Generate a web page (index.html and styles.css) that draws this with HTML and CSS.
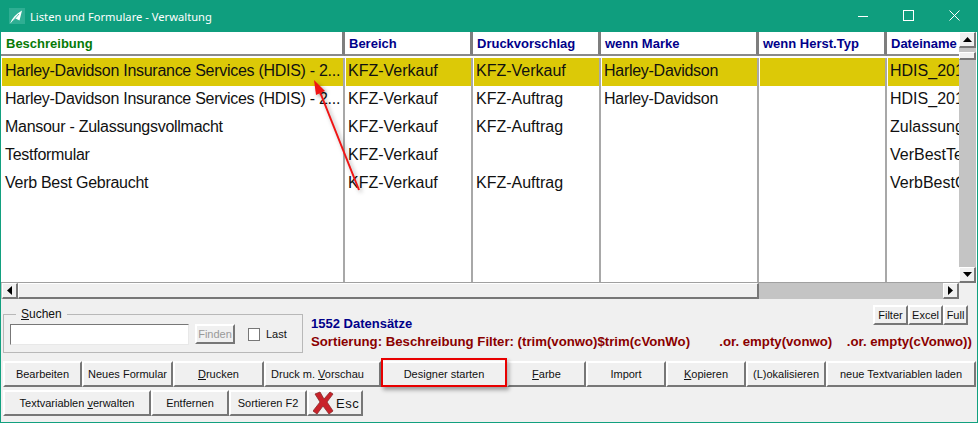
FILE: index.html
```html
<!DOCTYPE html>
<html lang="de">
<head>
<meta charset="utf-8">
<title>Listen und Formulare - Verwaltung</title>
<link rel="stylesheet" href="styles.css">
</head>
<body>
<div class="window">
  <header class="titlebar">
    <svg class="appicon" width="16" height="16" viewBox="0 0 16 16"><rect width="16" height="16" fill="#2fae93"/><path d="M1 15.5C3 10 7 6 13 2.5L10.5 12.5L6.5 10.5Z" fill="#fff"/><path d="M3 14L10 6" stroke="#2fae93" stroke-width=".8"/></svg>
    <span class="title">Listen und Formulare - Verwaltung</span>
    <div class="winbtns">
      <svg width="12" height="12" viewBox="0 0 12 12"><path d="M1 6.5H11" stroke="#fff"/></svg>
      <svg width="12" height="12" viewBox="0 0 12 12"><rect x=".5" y=".5" width="10" height="10" fill="none" stroke="#fff"/></svg>
      <svg width="12" height="12" viewBox="0 0 12 12"><path d="M.5 .5L10.5 10.5M10.5 .5L.5 10.5" stroke="#fff"/></svg>
    </div>
  </header>
  <div class="client">
    <div class="gridbox">
      <div class="gridmain">
        <div class="grid">
          <div class="row head">
            <div class="cell c1 green">Beschreibung</div><div class="cell c2">Bereich</div><div class="cell c3">Druckvorschlag</div><div class="cell c4">wenn Marke</div><div class="cell c5">wenn Herst.Typ</div><div class="cell c6">Dateiname</div>
          </div>
          <div class="row sel"><div class="cell c1">Harley-Davidson Insurance Services (HDIS) - 2...</div><div class="cell c2">KFZ-Verkauf</div><div class="cell c3">KFZ-Verkauf</div><div class="cell c4">Harley-Davidson</div><div class="cell c5"></div><div class="cell c6">HDIS_2017</div></div>
          <div class="row"><div class="cell c1">Harley-Davidson Insurance Services (HDIS) - 2...</div><div class="cell c2">KFZ-Verkauf</div><div class="cell c3">KFZ-Auftrag</div><div class="cell c4">Harley-Davidson</div><div class="cell c5"></div><div class="cell c6">HDIS_2017</div></div>
          <div class="row"><div class="cell c1">Mansour - Zulassungsvollmacht</div><div class="cell c2">KFZ-Verkauf</div><div class="cell c3">KFZ-Auftrag</div><div class="cell c4"></div><div class="cell c5"></div><div class="cell c6">Zulassungsv</div></div>
          <div class="row"><div class="cell c1">Testformular</div><div class="cell c2">KFZ-Verkauf</div><div class="cell c3"></div><div class="cell c4"></div><div class="cell c5"></div><div class="cell c6">VerBestTest</div></div>
          <div class="row"><div class="cell c1">Verb Best Gebraucht</div><div class="cell c2">KFZ-Verkauf</div><div class="cell c3">KFZ-Auftrag</div><div class="cell c4"></div><div class="cell c5"></div><div class="cell c6">VerbBestGe</div></div>
          <div class="row fill"><div class="cell c1"></div><div class="cell c2"></div><div class="cell c3"></div><div class="cell c4"></div><div class="cell c5"></div><div class="cell c6"></div></div>
        </div>
        <div class="vscroll">
          <div class="sbtn"><svg width="9" height="5" viewBox="0 0 9 5"><path d="M4.5 0L9 5H0Z"/></svg></div>
          <div class="vgap"></div>
          <div class="thumb vt"></div>
          <div class="track"></div>
          <div class="sbtn"><svg width="9" height="5" viewBox="0 0 9 5"><path d="M0 0H9L4.5 5Z"/></svg></div>
        </div>
      </div>
      <div class="hscroll">
        <div class="sbtn"><svg width="5" height="9" viewBox="0 0 5 9"><path d="M5 0V9L0 4.5Z"/></svg></div>
        <div class="thumb ht"></div>
        <div class="track"></div>
        <div class="sbtn"><svg width="5" height="9" viewBox="0 0 5 9"><path d="M0 0V9L5 4.5Z"/></svg></div>
        <div class="corner"></div>
      </div>
    </div>
    <div class="info">
      <fieldset class="search">
        <legend><u>S</u>uchen</legend>
        <input class="field" type="text" aria-label="Suchen">
        <button class="btn finden" disabled>Finden</button>
        <label class="last"><span class="check"></span>Last</label>
      </fieldset>
      <div class="status">
        <div class="count">1552 Datensätze</div>
        <div class="sort">Sortierung: Beschreibung Filter: (trim(vonwo)$trim(cVonWo)&nbsp;&nbsp;&nbsp;&nbsp;&nbsp;&nbsp;&nbsp;&nbsp;.or. empty(vonwo)&nbsp;&nbsp;&nbsp;&nbsp;.or. empty(cVonwo))</div>
      </div>
      <div class="minibtns">
        <button class="btn mini">Filter</button><button class="btn mini">Excel</button><button class="btn mini">Full</button>
      </div>
    </div>
    <div class="toolbar r1">
      <button class="btn w1">Bearbeiten</button>
      <button class="btn w2">Neues Formular</button>
      <button class="btn w3"><u>D</u>rucken</button>
      <button class="btn w4">Druck m. <u>V</u>orschau</button>
      <button class="btn w5 marked">Desi<u>g</u>ner starten</button>
      <button class="btn w6"><u>F</u>arbe</button>
      <button class="btn w7">Import</button>
      <button class="btn w8"><u>K</u>opieren</button>
      <button class="btn w9">(L)okalisieren</button>
      <button class="btn w10">neue Textvariablen laden</button>
    </div>
    <div class="toolbar r2">
      <button class="btn x1">Textvariablen <u>v</u>erwalten</button>
      <button class="btn x2">Entfernen</button>
      <button class="btn x3">Sortieren F2</button>
      <button class="btn x4 esc"><svg width="21" height="24" viewBox="0 0 21 24"><path d="M2 3L7 1L11 8L17 1L20 3L14 11L20 20L16 23L10 15L4 23L0 20L7 11Z" fill="#c9222a" stroke="#8a2a2a" stroke-width=".8"/></svg>Esc</button>
    </div>
  </div>
  <svg class="arrow" width="60" height="130" viewBox="0 0 60 130"><path d="M52 114L13 16" stroke="#f01414" stroke-width="2" fill="none"/><path d="M7 4L18 15L9 19Z" fill="#f01414"/></svg>
</div>
</body>
</html>
```
FILE: styles.css
```css
html, body { margin: 0; padding: 0; }
body { width: 978px; height: 423px; overflow: hidden; font-family: "Liberation Sans", Arial, sans-serif; }
.window { position: relative; box-sizing: border-box; width: 978px; height: 423px; background: #f0f0f0; border: 1px solid #12a07f; border-top: 0; display: flex; flex-direction: column; }
.titlebar { height: 32px; flex: none; margin: 0 -1px; background: #0f9e7e; color: #fff; display: flex; align-items: center; padding-left: 9px; font-family: "Noto Sans", sans-serif; font-size: 11.2px; }
.appicon { flex: none; }
.title { margin-left: 5px; }
.winbtns { margin-left: auto; display: flex; gap: 34px; padding-right: 17px; }
.client { flex: 1; display: flex; flex-direction: column; min-height: 0; }
.gridbox { height: 267px; flex: none; display: flex; flex-direction: column; background: #fff; }
.gridmain { display: flex; height: 251px; flex: none; padding-right: 1px; }
.grid { width: 958px; overflow: hidden; display: flex; flex-direction: column; border-bottom: 1px solid #a0a0a0; box-sizing: border-box; }
.row { display: flex; height: 28px; flex: none; font-size: 16px; color: #111; }
.row.fill { flex: 1; }
.row.head { height: 26px; font-size: 13px; font-weight: 700; color: #00008a; align-items: flex-start; }
.cell { box-sizing: border-box; height: 100%; padding-left: 2px; border-left: 1px solid #fff; border-right: 2px solid #a8a8a8; white-space: nowrap; overflow: hidden; line-height: 26px; }
.row.sel .cell { background: #dcc907; background-clip: padding-box; }
.head .cell { height: 24px; border-left: 0; border-right: 3px solid #7e7e7e; border-bottom: 2px solid #8a8a8a; line-height: 24px; padding-left: 4px; }
.green { color: #067a06; }
.row:not(.head) .c1, .row:not(.head) .c4 { letter-spacing: -.28px; }
.row:not(.head) .c1 { padding-left: 3px; }
.head .c1 { padding-left: 5px; }
.c1 { width: 344px; } .c2 { width: 128px; } .c3 { width: 128px; } .c4 { width: 158px; } .c5 { width: 128px; } .c6 { flex: 1; }
.grid .c6 { border-right: 0; }
.vscroll { width: 17px; flex: none; background: #c4c4c4; display: flex; flex-direction: column; }
.vscroll .sbtn { width: 17px; }
.vgap { height: 4px; flex: none; }
.hscroll { height: 16px; flex: none; display: flex; background: #c4c4c4; }
.track { flex: 1; }
.sbtn { width: 16px; height: 16px; flex: none; box-sizing: border-box; background: #f0f0f0; border: 1px solid; border-right-width: 2px; border-bottom-width: 2px; border-color: #fff #777 #777 #fff; display: flex; align-items: center; justify-content: center; }
.sbtn svg { fill: #000; }
.thumb { box-sizing: border-box; background: #f0f0f0; border: 1px solid; border-bottom-width: 2px; border-right-width: 2px; border-color: #fff #777 #777 #fff; flex: none; }
.vt { height: 8px; }
.ht { width: 741px; }
.hscroll .sbtn:first-child { margin-left: 1px; }
.corner { width: 18px; background: #f0f0f0; }
.info { display: flex; height: 62px; flex: none; }
.search { box-sizing: border-box; width: 300px; height: 46px; margin: 8px 0 0 2px; padding: 0 0 5px 6px; border: 1px solid #b8b8b8; display: flex; align-items: center; font-size: 11px; color: #111; }
.search legend { padding: 0 5px; margin-left: 6px; font-size: 12px; }
.field { box-sizing: border-box; width: 179px; height: 21px; border: 1px solid; border-color: #777 #e8e8e8 #e8e8e8 #777; background: #fff; padding: 0; }
.btn { box-sizing: border-box; background: #f0f0f0; border: 2px solid; border-color: #fff #777 #777 #fff; font: 11px "Liberation Sans", Arial, sans-serif; color: #111; padding: 0; margin: 0; flex: none; }
.finden { width: 40px; height: 20px; margin-left: 6px; color: #999; }
.last { display: flex; align-items: center; margin-left: 13px; }
.check { width: 10px; height: 11px; border: 1px solid #777; background: #fff; margin-right: 6px; }
.status { margin: 15px 0 0 8px; font-weight: 700; font-size: 13.2px; white-space: nowrap; width: 0; }
.count { color: #00008a; line-height: 19px; font-size: 13px; }
.sort { color: #8a0000; line-height: 18px; }
.minibtns { margin-left: auto; display: flex; margin-top: 6px; margin-right: 9px; height: 20px; }
.mini { height: 20px; }
.minibtns .mini:nth-child(1) { width: 35px; } .minibtns .mini:nth-child(2) { width: 35px; } .minibtns .mini:nth-child(3) { width: 25px; }
.toolbar { display: flex; flex: none; margin-left: 2px; }
.r1 { height: 26px; }
.r2 { height: 26px; margin-top: 3px; }
.w1 { width: 79px; } .w2 { width: 91px; } .w3 { width: 91px; } .w4 { width: 117px; padding-right: 10px; } .w5 { width: 126px; } .w6 { width: 79px; } .w7 { width: 80px; } .w8 { width: 80px; } .w9 { width: 80px; } .w10 { width: 150px; }
.x1 { width: 148px; } .x2 { width: 78px; } .x3 { width: 78px; } .x4 { width: 56px; }
.esc { display: flex; align-items: center; font-size: 13px; gap: 2px; padding-left: 4px; letter-spacing: .5px; }
.marked { position: relative; }
.marked::after { content: ""; position: absolute; left: -2px; top: -5px; right: -2px; bottom: -2px; border: 2px solid #e80000; box-shadow: 2px 3px 4px rgba(0,0,0,.35); pointer-events: none; }
.arrow { position: absolute; left: 306px; top: 76px; pointer-events: none; filter: drop-shadow(2px 2px 2px rgba(0,0,0,.35)); }
```
